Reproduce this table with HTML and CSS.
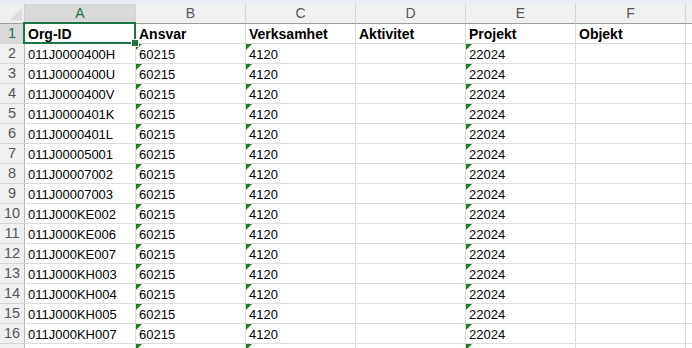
FILE: index.html
```html
<!DOCTYPE html>
<html>
<head>
<meta charset="utf-8">
<link rel="stylesheet" href="styles.css">
</head>
<body>
<div class="strip"></div>
<div class="sheet" id="sheet">
  <div class="corner"><svg class="corner-tri" width="12" height="12" viewBox="0 0 12 12"><polygon points="12,0 12,12 0,12" fill="#dcdcdc"/></svg></div>
  <div class="colhead sel">A</div>
  <div class="colhead">B</div>
  <div class="colhead">C</div>
  <div class="colhead">D</div>
  <div class="colhead">E</div>
  <div class="colhead">F</div>
  <div class="colhead tail"></div>
</div>
<div class="selection"><span class="handle"></span></div>
<script src="script.js"></script>
</body>
</html>
```
FILE: styles.css
```css
html, body { margin: 0; padding: 0; background: #fff; overflow: hidden; }
body { width: 692px; height: 348px; position: relative; font-family: "Liberation Sans", Arial, sans-serif; }
.strip { height: 4px; background: #e9edf1; }
.sheet {
  display: grid;
  grid-template-columns: 25px 111px 110px 110px 110px 110px 110px 6px;
  grid-auto-rows: 20px;
  grid-template-rows: 20px;
}
.corner { background: #eeeeee; border-right: 1px solid #d0d0d0; border-bottom: 1px solid #9f9f9f; box-sizing: border-box; position: relative; }
.corner-tri { position: absolute; right: 2px; bottom: 3px; }
.colhead {
  background: #f0f0f0; color: #555; font-size: 14px; text-align: center; line-height: 19px;
  border-right: 1px solid #d4d4d4; border-bottom: 1px solid #9f9f9f; box-sizing: border-box;
}
.colhead.sel { background: #d9d9d9; color: #217346; border-bottom: 2px solid #217346; line-height: 18px; }
.colhead.tail { border-right: none; }
.rowhead {
  background: #f0f0f0; color: #555; font-size: 14.5px; text-align: center; line-height: 19px;
  border-right: 1px solid #b8b8b8; border-bottom: 1px solid #d4d4d4; box-sizing: border-box;
}
.rowhead.sel { background: #d9d9d9; color: #217346; }
.cell {
  font-size: 13px; color: #000; line-height: 19px; padding: 1px 0 0 3px; white-space: nowrap; overflow: visible;
  border-right: 1px solid #dcdcdc; border-bottom: 1px solid #dcdcdc; box-sizing: border-box; position: relative;
}
.cell.b { font-weight: bold; font-size: 14px; }
.cell.tail { border-right: none; padding: 0; }
.cell.tri::before {
  content: ""; position: absolute; left: 0; top: 0;
  border-top: 6px solid #1e7b1e; border-right: 6px solid transparent;
}
.selection {
  position: absolute; left: 23px; top: 22px; width: 113px; height: 22px;
  border: 2px solid #217346; box-sizing: border-box;
}
.handle {
  position: absolute; right: -5px; bottom: -5px; width: 6px; height: 6px;
  background: #217346; border: 1px solid #fff;
}
```
FILE: script.js
```js
const ids = ["011J0000400H","011J0000400U","011J0000400V","011J0000401K","011J0000401L","011J00005001","011J00007002","011J00007003","011J000KE002","011J000KE006","011J000KE007","011J000KH003","011J000KH004","011J000KH005","011J000KH007",""];
const sheet = document.getElementById("sheet");
function add(cls, text) {
  const d = document.createElement("div");
  d.className = cls;
  d.textContent = text;
  sheet.appendChild(d);
}
add("rowhead sel", "1");
["Org-ID","Ansvar","Verksamhet","Aktivitet","Projekt","Objekt"].forEach(t => add("cell b", t));
add("cell tail", "");
ids.forEach((id, i) => {
  add("rowhead", i < 15 ? String(i + 2) : "");
  add("cell", id);
  add("cell tri", i < 15 ? "60215" : "");
  add("cell tri", i < 15 ? "4120" : "");
  add("cell", "");
  add("cell tri", i < 15 ? "22024" : "");
  add("cell", "");
  add("cell tail", "");
});
```
